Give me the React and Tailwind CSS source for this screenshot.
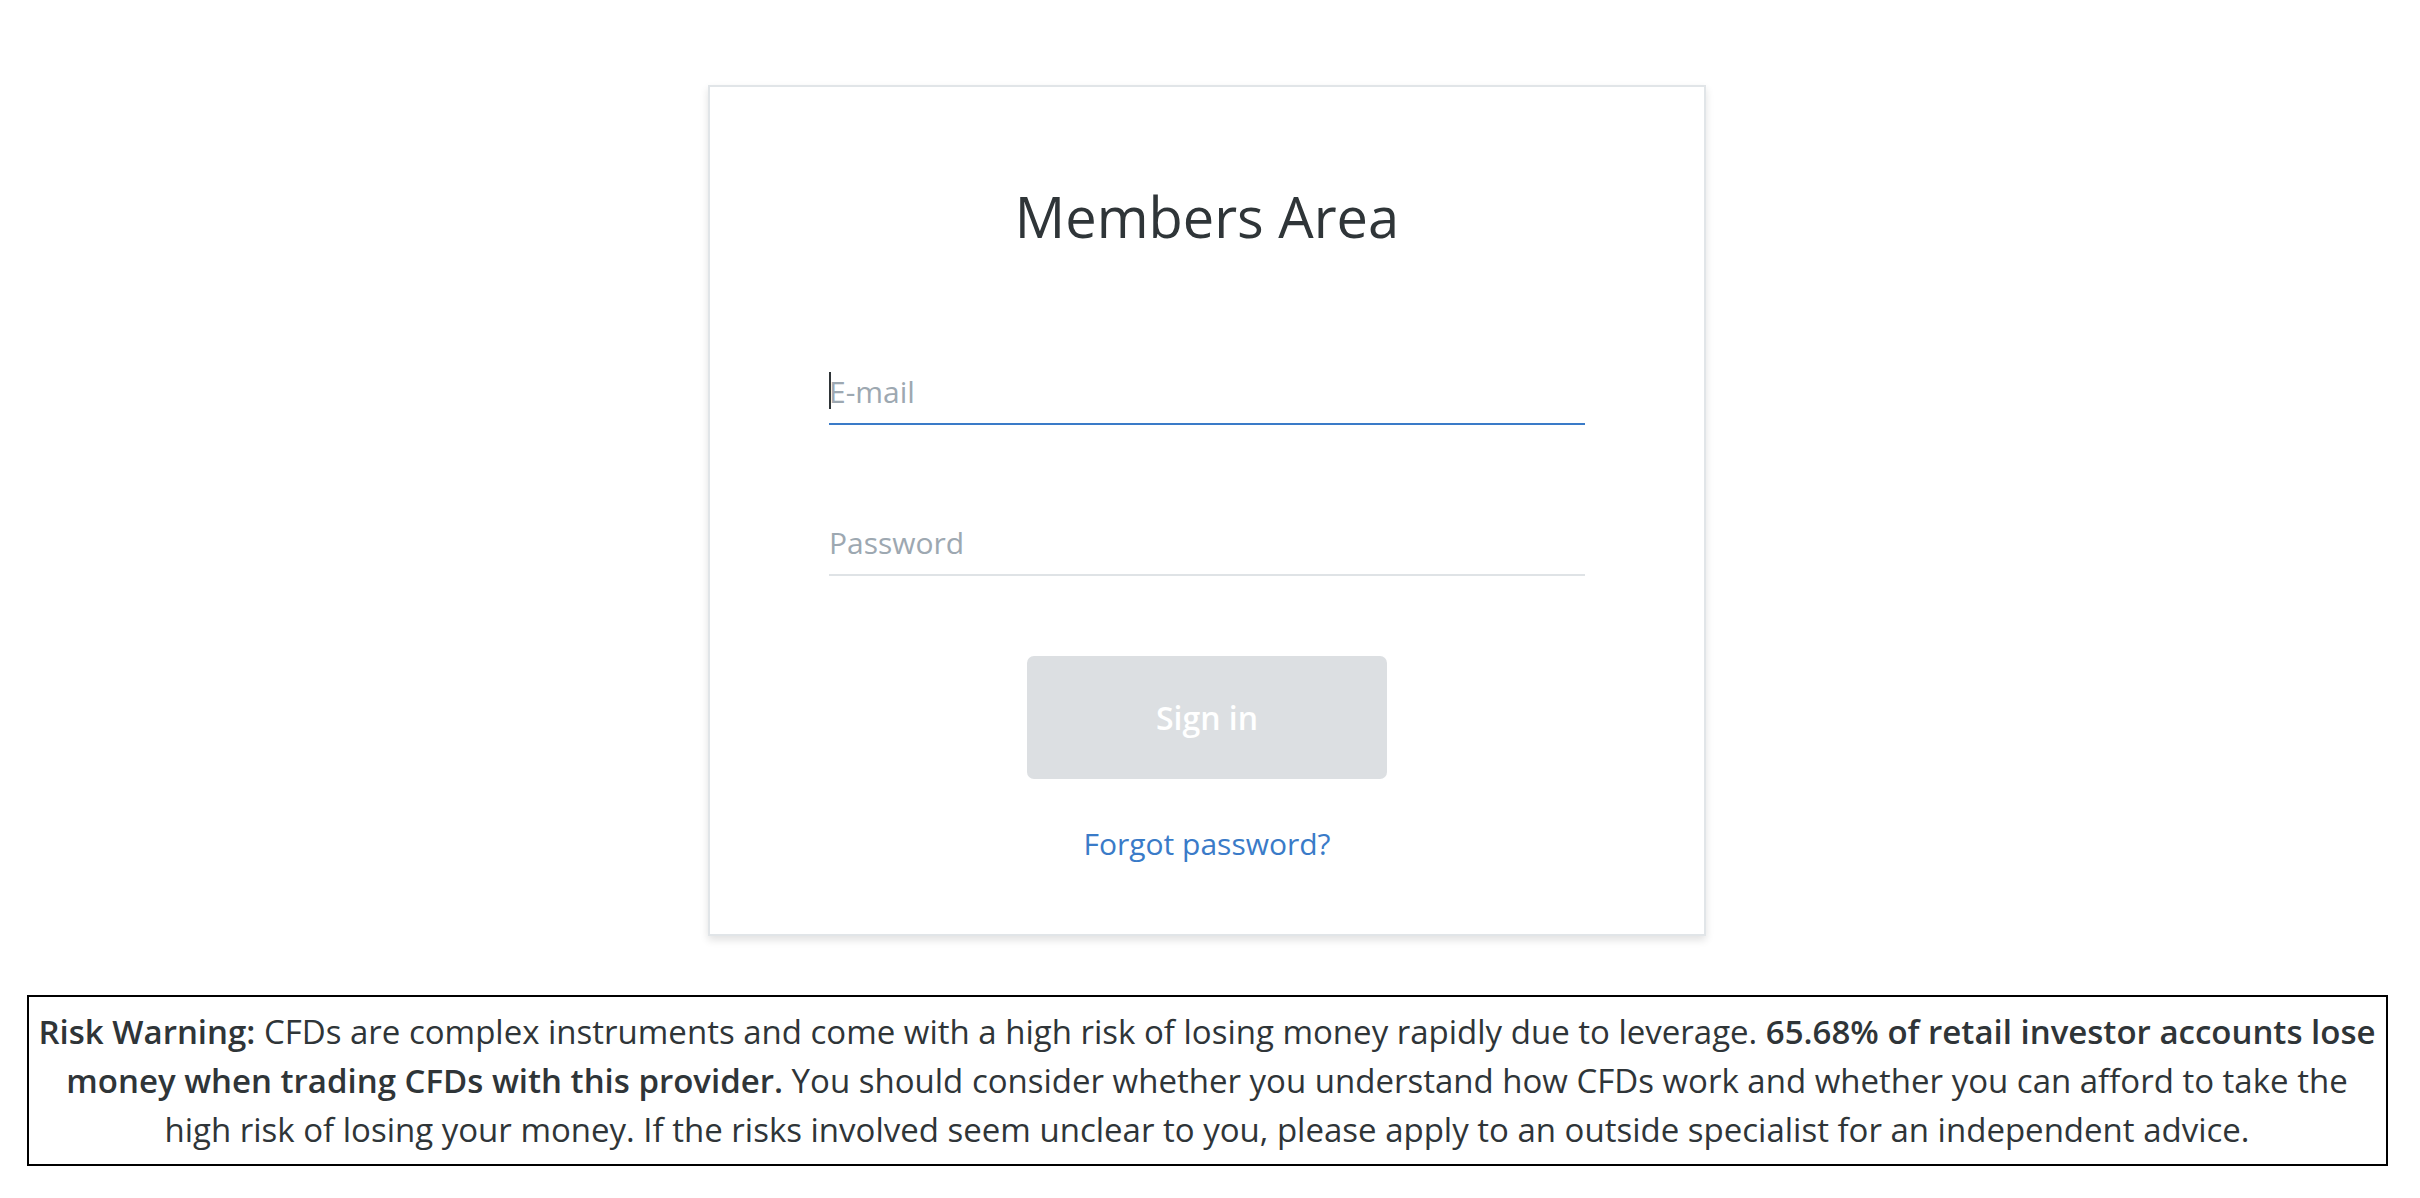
import { useState } from "react";

const font = { fontFamily: '"Open Sans", "Noto Sans", sans-serif' };

const LoginCard = () => {
  const [email, setEmail] = useState("");
  const [password, setPassword] = useState("");

  return (
    <div className="mx-auto flex w-[998px] flex-col items-center border-2 border-[#e1e5e8] bg-white pt-[101px] pb-[68px] shadow-[0_4px_8px_rgba(0,0,0,0.12)]">
      <h1 className="text-[56px] leading-none font-normal text-[#2f3538]">Members Area</h1>

      <div className="mt-[115px] flex w-[756px] flex-col">
        <div className="relative">
          <input
            type="email"
            value={email}
            onChange={(e) => setEmail(e.target.value)}
            placeholder="E-mail"
            className="h-[66px] w-full border-b-2 border-[#3a7bc8] bg-transparent text-[30px] text-[#2f3538] caret-transparent outline-none placeholder:text-[#9da8b1]"
          />
          <span className="absolute top-[13px] left-0 h-[37px] w-[2px] bg-[#2f3538]" />
        </div>

        <input
          type="password"
          value={password}
          onChange={(e) => setPassword(e.target.value)}
          placeholder="Password"
          className="mt-[85px] h-[66px] w-full border-b-2 border-[#dfe3e6] bg-transparent text-[30px] text-[#2f3538] outline-none placeholder:text-[#9da8b1]"
        />
      </div>

      <button
        type="button"
        disabled
        className="mt-[80px] h-[123px] w-[360px] rounded-[7px] bg-[#dcdfe2] text-[32px] font-semibold text-white"
      >
        Sign in
      </button>

      <a href="#" className="mt-[42px] text-[30px] text-[#3a7bc8]">
        Forgot password?
      </a>
    </div>
  );
};

const RiskWarning = () => (
  <div className="mx-auto mt-[59px] w-[2361px] border-2 border-black px-[4px] py-[10px] text-center text-[33px] leading-[49px] whitespace-nowrap text-[#2f3538]">
    <span className="font-semibold">Risk Warning:</span> CFDs are complex instruments and come with a high risk
    of losing money rapidly due to leverage.{" "}
    <span className="font-semibold">65.68% of retail investor accounts lose</span>
    <br />
    <span className="font-semibold">money when trading CFDs with this provider.</span> You should consider whether
    you understand how CFDs work and whether you can afford to take the
    <br />
    high risk of losing your money. If the risks involved seem unclear to you, please apply to an outside
    specialist for an independent advice.
  </div>
);

export default function App() {
  return (
    <div style={font} className="min-h-screen w-[2414px] bg-white pt-[85px]">
      <LoginCard />
      <RiskWarning />
    </div>
  );
}
